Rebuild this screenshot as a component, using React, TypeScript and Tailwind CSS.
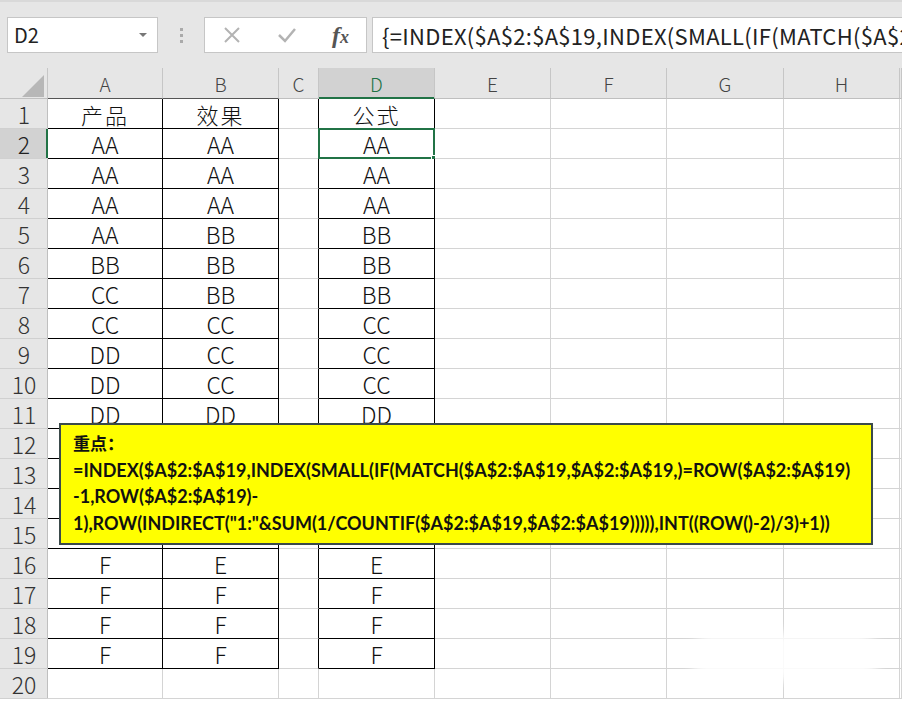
import React from "react";

const cols = ["A", "B", "C", "D", "E", "F", "G", "H", ""];
const colW = [48, 115, 116, 40, 116, 116, 116, 117, 116, 2];

const A = ["产品", "AA", "AA", "AA", "AA", "BB", "CC", "CC", "DD", "DD", "DD", "", "", "", "", "F", "F", "F", "F"];
const B = ["效果", "AA", "AA", "AA", "BB", "BB", "BB", "CC", "CC", "CC", "DD", "", "", "", "", "E", "F", "F", "F"];
const D = ["公式", "AA", "AA", "AA", "BB", "BB", "BB", "CC", "CC", "CC", "DD", "", "", "", "", "E", "F", "F", "F"];

const cellFont = { fontFamily: '"Noto Sans CJK SC", "Noto Sans", sans-serif' };

function Cell({ r, c }: { r: number; c: number }) {
  const isData = r >= 1 && r <= 19;
  const dataCol = c === 1 || c === 2 || c === 4;
  const rightBlack = isData && (c === 0 || c === 1 || c === 2 || c === 3 || c === 4);
  const bottomBlack = isData && dataCol;
  const gray = "#d4d4d4";
  const style: React.CSSProperties = {
    borderRightColor: rightBlack ? "#000" : gray,
    borderBottomColor: bottomBlack ? "#000" : gray,
  };
  if (c === 0) {
    const sel = r === 2;
    return (
      <div
        className={`h-[30px] flex items-center justify-center pt-[2px] text-[23px] font-light leading-none border-b ${sel ? "bg-[#d2d2d2] text-[#222]" : "bg-[#e6e6e6] text-[#333]"}`}
        style={{
          ...cellFont,
          borderBottomColor: "#d0d0d0",
          boxShadow: sel ? "inset -2px 0 0 #217346" : "inset -1px 0 0 #bfbfbf",
        }}
      >
        {r}
      </div>
    );
  }
  let text = "";
  if (isData) {
    if (c === 1) text = A[r - 1];
    if (c === 2) text = B[r - 1];
    if (c === 4) text = D[r - 1];
  }
  const isCJK = r === 1;
  return (
    <div
      className={`relative h-[30px] bg-white flex items-center justify-center border-r border-b text-[#111] font-light leading-none ${isCJK ? "text-[22px] tracking-[2px]" : "text-[23px] pt-[2px]"}`}
      style={{ ...style, ...cellFont }}
    >
      {text}
      {r === 2 && c === 4 && (
        <>
          <div className="absolute left-[-1px] top-[-1px] right-[-1px] bottom-[-1px] border-2 border-[#217346]" />
          <div className="absolute right-[-4px] bottom-[-4px] w-[7px] h-[7px] bg-[#217346] border border-white" />
        </>
      )}
    </div>
  );
}

export default function App() {
  const rows = Array.from({ length: 20 }, (_, i) => i + 1);
  const template = colW.map((w) => `${w}px`).join(" ");
  return (
    <div className="relative w-[902px] h-[702px] overflow-hidden bg-white" style={cellFont}>
      {/* toolbar */}
      <div className="h-[68px] bg-[#e6e6e6] border-t-2 border-[#d9d9d9] flex items-start pt-[15px] pl-[7px]">
        <div className="w-[151px] h-[36px] bg-white border border-[#c6c6c6] flex items-center justify-between pl-[6px] pr-[10px]">
          <span className="text-[20px] text-[#222] leading-none">D2</span>
          <svg width="8" height="5" viewBox="0 0 8 5"><path d="M0 0 L8 0 L4 4 Z" fill="#777" /></svg>
        </div>
        <div className="w-[46px] h-[36px] flex flex-col items-center justify-center gap-[3px]">
          <div className="w-[3px] h-[3px] bg-[#aaa]" />
          <div className="w-[3px] h-[3px] bg-[#aaa]" />
          <div className="w-[3px] h-[3px] bg-[#aaa]" />
        </div>
        <div className="w-[163px] h-[36px] bg-white border border-[#c6c6c6] flex items-center">
          <svg className="ml-[18px]" width="18" height="18" viewBox="0 0 18 18">
            <path d="M2 2 L16 16 M16 2 L2 16" stroke="#b3b3b3" strokeWidth="2" />
          </svg>
          <svg className="ml-[36px]" width="20" height="16" viewBox="0 0 20 16">
            <path d="M2 8 L8 14 L18 2" stroke="#b3b3b3" strokeWidth="2.5" fill="none" />
          </svg>
          <span
            className="ml-[35px] text-[24px] italic font-bold text-[#555] leading-none"
            style={{ fontFamily: '"Liberation Serif", serif' }}
          >
            f<span className="text-[18px]">x</span>
          </span>
        </div>
        <div className="ml-[5px] flex-1 h-[36px] bg-white border border-r-0 border-[#c6c6c6] flex items-center pl-[9px] overflow-hidden whitespace-nowrap">
          <span className="text-[22px] tracking-[0.3px] text-[#222] leading-none">
            {"{=INDEX($A$2:$A$19,INDEX(SMALL(IF(MATCH($A$2:$A$19,$A$2:$A$19,)=ROW($A$2:$A$19)-1,ROW($A$2:$A$19)-1),ROW(INDIRECT(\"1:\"&SUM(1/COUNTIF($A$2:$A$19,$A$2:$A$19))))),INT((ROW()-2)/3)+1))}"}
          </span>
        </div>
      </div>

      {/* grid */}
      <div className="grid" style={{ gridTemplateColumns: template }}>
        <div className="relative h-[31px] bg-[#e6e6e6] border-b border-[#bfbfbf]" style={{ boxShadow: "inset -1px 0 0 #c6c6c6" }}>
          <svg className="absolute left-[22px] top-[7px]" width="22" height="22" viewBox="0 0 22 22">
            <path d="M22 0 L22 22 L0 22 Z" fill="#b7b7b7" />
          </svg>
        </div>
        {cols.map((c, i) => {
          const sel = c === "D";
          const dark = c === "A" || c === "B";
          return (
            <div
              key={"h" + i}
              className={`h-[31px] flex items-center justify-center pt-[1px] text-[19px] font-light leading-none border-r border-b ${sel ? "bg-[#d2d2d2] text-[#217346]" : "bg-[#e6e6e6] text-[#444]"}`}
              style={{
                borderRightColor: "#c6c6c6",
                borderBottomColor: sel ? "#217346" : dark ? "#555" : "#bfbfbf",
                boxShadow: sel ? "inset 0 -1px 0 #217346" : undefined,
              }}
            >
              {c}
            </div>
          );
        })}
        {rows.map((r) =>
          colW.map((_, c) => <Cell key={r + "-" + c} r={r} c={c} />)
        )}
      </div>

      {/* note box */}
      <div
        className="absolute left-[59px] top-[423px] w-[814px] h-[122px] bg-[#ffff00] border-2 border-[#3b4a4a] pl-[12px] pt-[5px] text-[#111] font-bold text-[18px] leading-[26.5px] whitespace-nowrap"
        style={{ fontFamily: 'Lato, "Noto Sans CJK SC", sans-serif' }}
      >
        <div style={{ fontFamily: '"Noto Sans CJK SC", sans-serif' }} className="text-[17px]">重点：</div>
        <div>=INDEX($A$2:$A$19,INDEX(SMALL(IF(MATCH($A$2:$A$19,$A$2:$A$19,)=ROW($A$2:$A$19)</div>
        <div>-1,ROW($A$2:$A$19)-</div>
        <div>1),ROW(INDIRECT("1:"&amp;SUM(1/COUNTIF($A$2:$A$19,$A$2:$A$19))))),INT((ROW()-2)/3)+1))</div>
      </div>

      {/* watermark wash */}
      <div className="absolute left-[690px] top-[632px] w-[190px] h-[50px] bg-white rounded-full blur-[6px] opacity-90" />
    </div>
  );
}
